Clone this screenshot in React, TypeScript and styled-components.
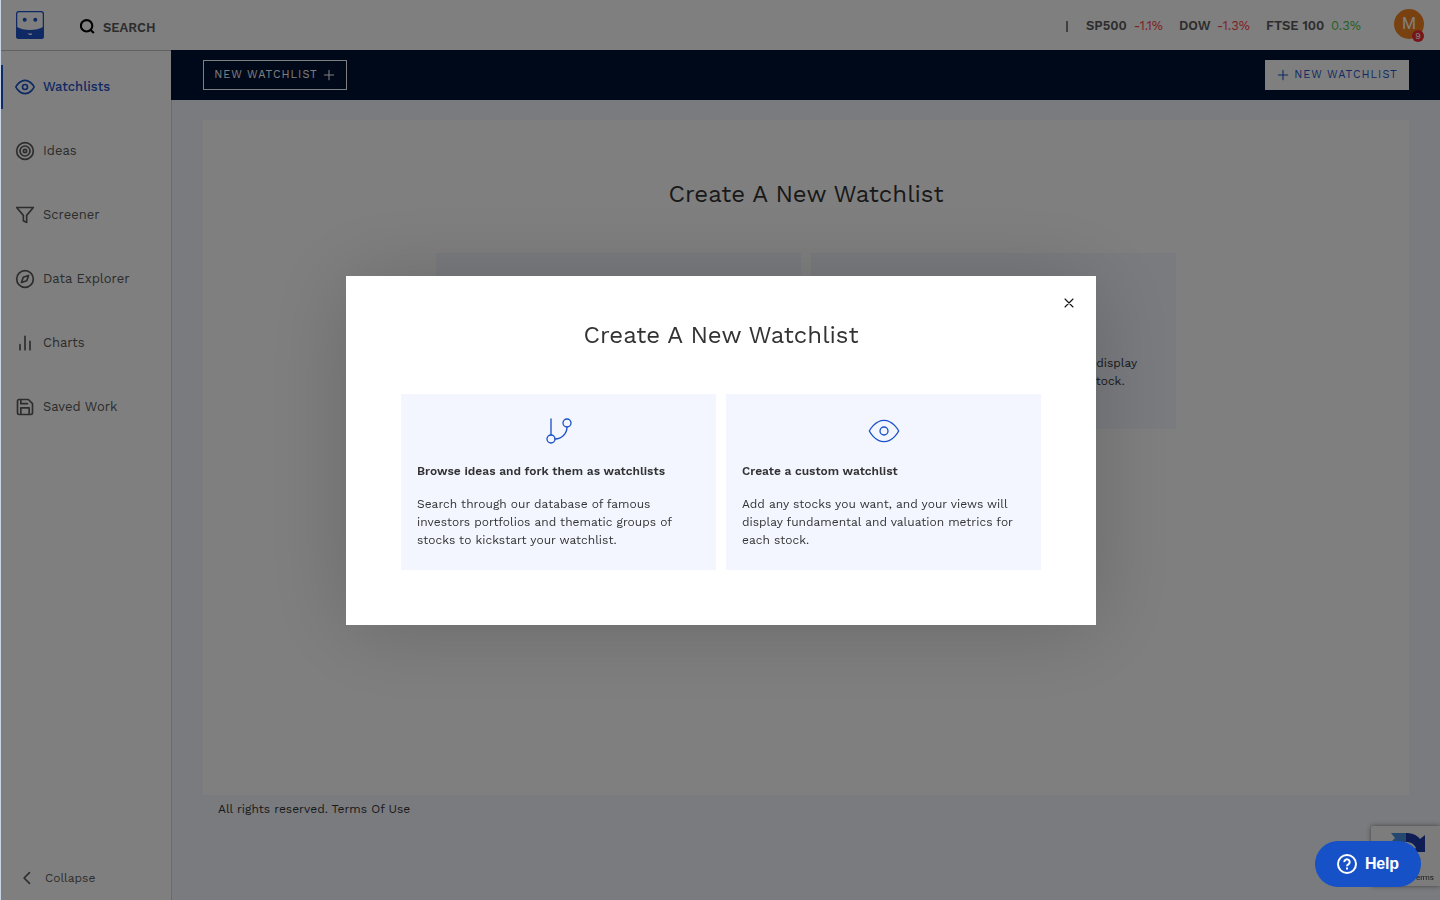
import React from "react";
import styled, { createGlobalStyle } from "styled-components";

const blue = "#1c52c8";

const GlobalStyle = createGlobalStyle`
  *, *::before, *::after { box-sizing: border-box; }
  body {
    margin: 0;
    overflow: hidden;
    background: #c9d3e6;
    color: #333;
    font-family: "Work Sans", "Open Sans", sans-serif;
    font-size: 12px;
  }
  h1, h2, p { margin: 0; }
  button { font: inherit; color: inherit; background: none; border: 0; padding: 0; }
  svg { display: block; flex: none; }
`;

const Label = styled.span`
  white-space: nowrap;
`;

const Page = styled.div`
  display: flex;
  flex-direction: column;
  height: 900px;
  margin-left: 1px;
  background: #fff;
`;

const Header = styled.header`
  display: flex;
  align-items: center;
  flex: none;
  height: 50px;
  padding: 0 16px 0 15px;
`;

const SearchButton = styled.button`
  display: flex;
  align-items: center;
  gap: 8px;
  margin: 5px 0 0 36px;
  font-size: 13px;
  font-weight: 600;
  color: #5a5a5a;
  svg { margin-bottom: 2px; }
`;

const Tickers = styled.div`
  display: flex;
  align-items: center;
  margin: 2px 33px 0 auto;
  font-size: 13px;
  line-height: 18px;
  color: #5a5a5a;
`;

const Divider = styled.span`
  width: 2px;
  height: 11px;
  margin-right: 18px;
  background: #808080;
`;

const Ticker = styled.div<{ $width: number }>`
  display: flex;
  justify-content: space-between;
  width: ${(p) => p.$width}px;
  & + & { margin-left: 16px; }
  b { font-weight: 600; }
`;

const Change = styled.span<{ $up?: boolean }>`
  color: ${(p) => (p.$up ? "#4fc353" : "#ff4347")};
`;

const Avatar = styled.div`
  position: relative;
  display: flex;
  align-items: center;
  justify-content: center;
  width: 30px;
  height: 30px;
  margin-bottom: 2px;
  border-radius: 50%;
  background: #f58220;
  color: #fff;
  font: 16px/30px Roboto, sans-serif;
`;

const Badge = styled.span`
  position: absolute;
  right: 0;
  bottom: -3px;
  width: 12px;
  height: 12px;
  border-radius: 50%;
  background: #f02a33;
  font: 9px/12px "Work Sans", sans-serif;
  text-align: center;
`;

const Body = styled.div`
  display: flex;
  flex: 1;
  min-height: 0;
`;

const Sidebar = styled.nav`
  display: flex;
  flex-direction: column;
  width: 171px;
  border-top: 1px solid #c2c2c4;
  border-right: 1px solid #d3d5de;
  padding: 14px 0 10px;
`;

const NavItem = styled.a<{ $active?: boolean }>`
  display: flex;
  align-items: center;
  gap: 8px;
  height: 44px;
  margin-bottom: 20px;
  padding-left: ${(p) => (p.$active ? 12 : 14)}px;
  border-left: ${(p) => (p.$active ? `2px solid ${blue}` : "0")};
  color: ${(p) => (p.$active ? blue : "#5a5a5a")};
  font-size: 13px;
  font-weight: ${(p) => (p.$active ? 500 : 400)};
  ${Label} { margin-bottom: 2px; }
`;

const Collapse = styled.button`
  display: flex;
  align-items: center;
  gap: 8px;
  height: 24px;
  margin-top: auto;
  padding-left: 16px;
  color: #5a5a5a;
`;

const Content = styled.main`
  display: flex;
  flex-direction: column;
  flex: 1;
  background: #f5f7ff;
`;

const Toolbar = styled.div`
  display: flex;
  align-items: center;
  justify-content: space-between;
  flex: none;
  height: 50px;
  margin-left: -1px;
  padding: 0 31px 0 32px;
  background: #001233;
`;

const ToolbarButton = styled.button<{ $solid?: boolean }>`
  display: flex;
  align-items: center;
  justify-content: center;
  gap: 3px;
  width: 144px;
  height: 30px;
  padding: ${(p) => (p.$solid ? "0 1px 0 0" : "0 0 0 1px")};
  border: 1px solid #fff;
  background: ${(p) => (p.$solid ? "#fff" : "transparent")};
  color: ${(p) => (p.$solid ? blue : "#fff")};
  font-size: 11px;
  letter-spacing: 1px;
  ${Label} { margin-bottom: 2px; }
`;

const Panel = styled.section`
  display: flex;
  flex-direction: column;
  align-items: center;
  height: 675px;
  margin: 20px 31px 0;
  padding-top: 58px;
  background: #fff;
`;

const Title = styled.h2`
  font-size: 24px;
  line-height: 32px;
  font-weight: 400;
  white-space: nowrap;
`;

const Cards = styled.div`
  display: flex;
  gap: 10px;
  margin-top: 43px;
`;

const Card = styled.article<{ $width: number }>`
  display: flex;
  flex-direction: column;
  align-items: center;
  width: ${(p) => p.$width}px;
  height: 176px;
  padding: 21px 16px 0;
  background: #f3f6ff;
  color: #333;
  svg { color: ${blue}; }
`;

const CardTitle = styled.h3`
  align-self: stretch;
  margin: 15px 0 15px;
  font-size: 12px;
  line-height: 18px;
  font-weight: 600;
`;

const CardText = styled.p`
  align-self: stretch;
  line-height: 18px;
`;

const Footer = styled.footer`
  padding: 5px 46px;
  line-height: 18px;
  color: #333;
`;

const Captcha = styled.aside`
  position: fixed;
  right: 0;
  top: 826px;
  display: flex;
  flex-direction: column;
  align-items: flex-end;
  justify-content: space-between;
  width: 69px;
  height: 60px;
  padding: 6px 6px 3px;
  background: #f9f9f9;
  box-shadow: 0 0 5px gray;
  border-radius: 2px 0 0 2px;
  color: #333;
  font: 8px/10px Roboto, sans-serif;
  white-space: nowrap;
  svg { margin-right: 8px; }
`;

const Overlay = styled.div`
  position: fixed;
  inset: 0 0 0 1px;
  display: flex;
  align-items: flex-start;
  justify-content: center;
  padding: 276px 0 0 1px;
  background: rgba(0, 0, 0, 0.5);
`;

const Modal = styled.section`
  position: relative;
  display: flex;
  flex-direction: column;
  align-items: center;
  width: 750px;
  height: 349px;
  padding-top: 43px;
  background: #fff;
  box-shadow: 0 4px 80px rgba(0, 0, 0, 0.18);
`;

const CloseButton = styled.button`
  position: absolute;
  top: 19px;
  right: 19px;
  color: #111;
`;

const HelpButton = styled.button`
  position: fixed;
  right: 19px;
  bottom: 13px;
  display: flex;
  align-items: center;
  gap: 6px;
  width: 106px;
  height: 46px;
  padding-left: 20px;
  border-radius: 23px;
  background: #1651c7;
  color: #fff;
  font: 700 16px/20px "Liberation Sans", Arial, sans-serif;
  letter-spacing: -0.2px;
`;

type IconProps = { size?: number; stroke?: number; children: React.ReactNode };

const Icon = ({ size = 20, stroke = 2, children }: IconProps) => (
  <svg
    width={size}
    height={size}
    viewBox="0 0 24 24"
    fill="none"
    stroke="currentColor"
    strokeWidth={stroke}
    strokeLinecap="round"
    strokeLinejoin="round"
  >
    {children}
  </svg>
);

const eye = (
  <>
    <path d="M1 12s4-8 11-8 11 8 11 8-4 8-11 8-11-8-11-8z" />
    <circle cx="12" cy="12" r="3" />
  </>
);
const target = (
  <>
    <circle cx="12" cy="12" r="10" />
    <circle cx="12" cy="12" r="6" />
    <circle cx="12" cy="12" r="2" />
  </>
);
const funnel = <path d="M22 3H2l8 9.46V19l4 2v-8.54z" />;
const compass = (
  <>
    <circle cx="12" cy="12" r="10" />
    <path d="M16.24 7.76l-2.12 6.36-6.36 2.12 2.12-6.36z" />
  </>
);
const bars = <path d="M18 20V10M12 20V4M6 20v-6" />;
const save = (
  <path d="M19 21H5a2 2 0 0 1-2-2V5a2 2 0 0 1 2-2h11l5 5v11a2 2 0 0 1-2 2zM17 21v-8H7v8M7 3v5h8" />
);
const branch = (
  <>
    <path d="M6 3v12M18 9a9 9 0 0 1-9 9" />
    <circle cx="18" cy="6" r="3" />
    <circle cx="6" cy="18" r="3" />
  </>
);
const plus = <path d="M12 5v14M5 12h14" />;

const navItems = [
  { label: "Watchlists", icon: eye, active: true },
  { label: "Ideas", icon: target },
  { label: "Screener", icon: funnel },
  { label: "Data Explorer", icon: compass },
  { label: "Charts", icon: bars },
  { label: "Saved Work", icon: save },
];

const Logo = () => (
  <svg width="28" height="28" viewBox="0 0 28 28">
    <rect x="0.6" y="0.6" width="26.8" height="26.8" rx="2.4" fill="none" stroke={blue} strokeWidth="1.3" />
    <path d="M0 15.5C4 18 9 19 14 19s10-1 14-3.500V25a3 3 0 0 1-3 3H3a3 3 0 0 1-3-3z" fill={blue} />
    <circle cx="8.700" cy="8.700" r="2" fill={blue} />
    <circle cx="19.300" cy="8.700" r="2" fill={blue} />
    <path d="M11.300 22.200c1.700.5 3.200.5 4.900.2-.3 1-.9 1.600-1.600 1.600-1.200 0-2.200-.7-3.300-1.800z" fill="#fff" />
  </svg>
);

const Options = ({ width }: { width: number }) => (
  <Cards>
    <Card $width={width}>
      <Icon size={32} stroke={1}>{branch}</Icon>
      <CardTitle>Browse ideas and fork them as watchlists</CardTitle>
      <CardText>
        Search through our database of famous investors portfolios and thematic
        groups of stocks to kickstart your watchlist.
      </CardText>
    </Card>
    <Card $width={width}>
      <Icon size={32} stroke={1}>{eye}</Icon>
      <CardTitle>Create a custom watchlist</CardTitle>
      <CardText>
        Add any stocks you want, and your views will display fundamental and
        valuation metrics for each stock.
      </CardText>
    </Card>
  </Cards>
);

export default function App() {
  return (
    <>
      <GlobalStyle />
      <Page>
        <Header>
          <Logo />
          <SearchButton>
            <svg width="15" height="15" viewBox="0 0 15 15" fill="none" stroke="#000" strokeWidth="2.1">
              <circle cx="6.600" cy="6.800" r="5.700" />
              <path d="M10.500 10.700l3.300 3.300" />
            </svg>
            <Label>SEARCH</Label>
          </SearchButton>
          <Tickers>
            <Divider />
            <Ticker $width={77}><b>SP500</b><Change>-1.1%</Change></Ticker>
            <Ticker $width={71}><b>DOW</b><Change>-1.3%</Change></Ticker>
            <Ticker $width={95}><b>FTSE 100</b><Change $up>0.3%</Change></Ticker>
          </Tickers>
          <Avatar>M<Badge>9</Badge></Avatar>
        </Header>
        <Body>
          <Sidebar>
            {navItems.map((item) => (
              <NavItem key={item.label} $active={item.active}>
                <Icon>{item.icon}</Icon>
                <Label>{item.label}</Label>
              </NavItem>
            ))}
            <Collapse>
              <Icon><path d="M15 18.500L8.500 12 15 5.500" /></Icon>
              <Label>Collapse</Label>
            </Collapse>
          </Sidebar>
          <Content>
            <Toolbar>
              <ToolbarButton>
                <Label>NEW WATCHLIST</Label>
                <Icon size={16} stroke={1.6}>{plus}</Icon>
              </ToolbarButton>
              <ToolbarButton $solid>
                <Icon size={16} stroke={1.6}>{plus}</Icon>
                <Label>NEW WATCHLIST</Label>
              </ToolbarButton>
            </Toolbar>
            <Panel>
              <Title>Create A New Watchlist</Title>
              <Options width={365} />
            </Panel>
            <Footer>All rights reserved. Terms Of Use</Footer>
          </Content>
        </Body>
      </Page>
      <Captcha>
        <svg width="35" height="36" viewBox="0 0 35 36">
          <path d="M0 1h16v9c-4 0-6 3-6 7L0 10l4-4z" fill="#4a90e2" />
          <path d="M15 1c6 0 11 2 14 6l5-4v17H20l5-4c-2-4-5-6-10-6z" fill="#1c3aa9" />
          <path d="M0 18h9c1 8 12 10 16 3l5 6c-7 9-19 10-26 1l-4 4z" fill="#ababab" />
        </svg>
        <span>Privacy - Terms</span>
      </Captcha>
      <Overlay>
        <Modal>
          <CloseButton aria-label="Close">
            <Icon size={16} stroke={1.6}><path d="M18 6L6 18M6 6l12 12" /></Icon>
          </CloseButton>
          <Title>Create A New Watchlist</Title>
          <Options width={315} />
        </Modal>
      </Overlay>
      <HelpButton>
        <svg width="24" height="24" viewBox="0 0 24 24" fill="none" stroke="#fff" strokeWidth="2">
          <circle cx="12" cy="12" r="9" />
          <path d="M9.300 10.100a2.700 2.700 0 1 1 4.300 2.100c-1 .7-1.600 1-1.600 2" />
          <path d="M12 15.600v2" />
        </svg>
        <span>Help</span>
      </HelpButton>
    </>
  );
}
